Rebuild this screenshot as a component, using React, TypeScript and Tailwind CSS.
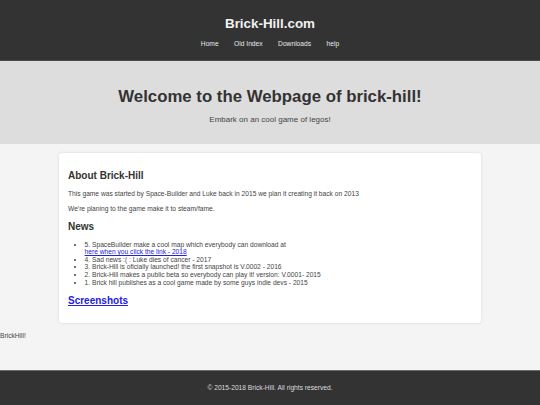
import React from 'react';

const news = [
    '4. Sad news :( : Luke dies of cancer - 2017',
    '3. Brick-Hill is oficially launched! the first snapshot is V.0002 - 2016',
    '2. Brick-Hill makes a public beta so everybody can play it! version: V.0001- 2015',
    '1. Brick hill publishes as a cool game made by some guys indie devs - 2015',
];

export default function App() {
    return (
        <div className="min-h-[405px] bg-[#f4f4f4] font-['Liberation_Sans',Arial,sans-serif] flex flex-col">
            {/* HEADER */}
            <header className="h-[61px] bg-[#333333] border-b border-[#4a4a4a] flex flex-col items-center">
                <h1 className="mt-[15.6px] text-[13.4px] leading-[15.4px] font-bold text-[#f2f2f2]">Brick-Hill.com</h1>
                <nav className="mt-[9.2px] flex gap-[15.5px] text-[6.67px] leading-[7.67px] text-[#e8e8e8]">
                    <a href="#">Home</a>
                    <a href="#">Old Index</a>
                    <a href="#">Downloads</a>
                    <a href="#">help</a>
                </nav>
            </header>

            {/* HERO */}
            <section className="h-[83px] bg-[#dddddd] flex flex-col items-center">
                <h2 className="mt-[26.3px] text-[16.8px] leading-[19.3px] font-bold text-[#333333]">Welcome to the Webpage of brick-hill!</h2>
                <p className="mt-[8.8px] text-[8px] leading-[9.2px] text-[#444444]">Embark on an cool game of legos!</p>
            </section>

            {/* CARD */}
            <main className="pt-[9px]">
                <div className="w-[422px] mx-auto bg-white rounded-[3px] shadow-[0_0_3px_rgba(0,0,0,0.12)] px-[9px] pt-[17px] pb-[16.7px]">
                    <h3 className="text-[10px] leading-[11.5px] font-bold text-[#333333]">About Brick-Hill</h3>
                    <p className="mt-[8.4px] text-[6.67px] leading-[7.67px] text-[#444444]">
                        This game was started by Space-Builder and Luke back in 2015 we plan it creating it back on 2013
                    </p>
                    <p className="mt-[7.7px] text-[6.67px] leading-[7.67px] text-[#444444]">
                        We're planing to the game make it to steam/fame.
                    </p>
                    <h3 className="mt-[7.7px] text-[10px] leading-[11.5px] font-bold text-[#333333]">News</h3>
                    <ul className="mt-[8.5px] pl-[16.6px] list-disc text-[6.67px] leading-[7.6px] text-[#444444]">
                        <li>
                            5. SpaceBuilder make a cool map which everybody can download at
                            <br />
                            <a href="#" className="text-[#2222dd] underline">here when you click the link - 2018</a>
                        </li>
                        {news.map((n) => (
                            <li key={n}>{n}</li>
                        ))}
                    </ul>
                    <a href="#" className="block mt-[8.4px] text-[10px] leading-[11.5px] font-bold text-[#2222dd] underline">Screenshots</a>
                </div>
                <p className="mt-[9.5px] text-[6.67px] leading-[7.67px] text-[#444444]">BrickHill!</p>
            </main>

            <div className="flex-1" />

            {/* FOOTER */}
            <footer className="h-[35px] bg-[#333333] border-t border-[#6a6a6a] flex items-center justify-center">
                <p className="text-[6.67px] leading-[7.67px] text-[#dddddd]">© 2015-2018 Brick-Hill. All rights reserved.</p>
            </footer>
        </div>
    );
}
